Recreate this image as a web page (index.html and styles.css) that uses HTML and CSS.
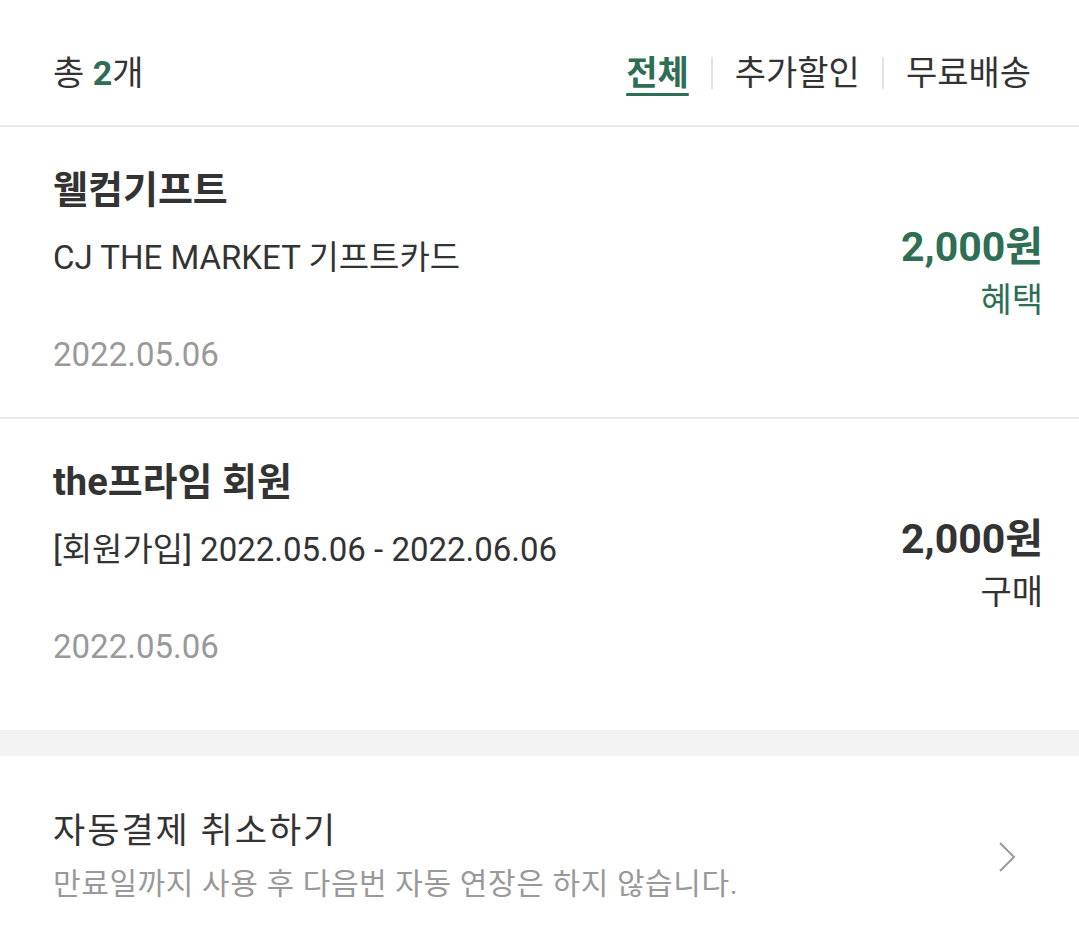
FILE: index.html
```html
<!DOCTYPE html>
<html lang="ko">
<head>
    <meta charset="UTF-8">
    <meta name="viewport" content="width=device-width, initial-scale=1.0">
    <title>멤버십 내역</title>
    <link rel="stylesheet" href="styles.css">
</head>
<body>
    <div class="list-header">
        <p class="total">총 <strong>2</strong>개</p>
        <ul class="tabs">
            <li class="tab active">전체</li>
            <li class="tab">추가할인</li>
            <li class="tab">무료배송</li>
        </ul>
    </div>

    <ul class="history">
        <li class="history-item">
            <div class="item-info">
                <p class="item-title">웰컴기프트</p>
                <p class="item-desc">CJ THE MARKET 기프트카드</p>
                <p class="item-date">2022.05.06</p>
            </div>
            <div class="item-amount benefit">
                <p class="price">2,000원</p>
                <p class="type">혜택</p>
            </div>
        </li>
        <li class="history-item">
            <div class="item-info">
                <p class="item-title">the프라임 회원</p>
                <p class="item-desc">[회원가입] 2022.05.06 - 2022.06.06</p>
                <p class="item-date">2022.05.06</p>
            </div>
            <div class="item-amount">
                <p class="price">2,000원</p>
                <p class="type">구매</p>
            </div>
        </li>
    </ul>

    <a class="cancel-link" href="#">
        <div>
            <p class="cancel-title">자동결제 취소하기</p>
            <p class="cancel-desc">만료일까지 사용 후 다음번 자동 연장은 하지 않습니다.</p>
        </div>
        <svg class="chevron" width="20" height="32" viewBox="0 0 20 32">
            <polyline points="3,2 17,16 3,30" fill="none" stroke="#999" stroke-width="2"/>
        </svg>
    </a>
</body>
</html>
```

FILE: styles.css
```css
body {
    margin: 0;
    font-family: Roboto, "Noto Sans CJK KR", sans-serif;
    color: #333333;
    background-color: #ffffff;
}
p, ul {
    margin: 0;
    padding: 0;
}
ul {
    list-style: none;
}
.list-header {
    height: 127px;
    box-sizing: border-box;
    display: flex;
    justify-content: space-between;
    align-items: center;
    padding: 20px 48px 0 53px;
    border-bottom: 2px solid #ebebeb;
}
.total {
    font-size: 34px;
    line-height: 40px;
}
.total strong {
    color: #2d6e55;
}
.tabs {
    display: flex;
    align-items: center;
}
.tab {
    font-size: 34px;
    line-height: 32px;
    padding: 0 22px;
    border-left: 2px solid #e3e3e3;
}
.tab:first-child {
    border-left: none;
}
.tab:last-child {
    padding-right: 0;
}
.tab.active {
    color: #2d6e55;
    font-weight: bold;
    text-decoration: underline;
    text-decoration-thickness: 3px;
    text-underline-offset: 8px;
}
.history-item {
    display: flex;
    justify-content: space-between;
    align-items: center;
    padding: 38px 36px 40px 53px;
    border-bottom: 2px solid #ebebeb;
}
.history-item:last-child {
    border-bottom: none;
    padding-bottom: 61px;
}
.item-title {
    font-size: 38px;
    font-weight: bold;
    line-height: 50px;
}
.item-desc {
    font-size: 33px;
    line-height: 44px;
    margin-top: 21px;
}
.item-date {
    font-size: 33px;
    line-height: 44px;
    margin-top: 53px;
    color: #999999;
}
.item-amount {
    text-align: right;
}
.price {
    font-size: 41px;
    font-weight: bold;
    line-height: 50px;
}
.type {
    font-size: 34px;
    line-height: 40px;
    margin-top: 8px;
}
.benefit {
    color: #2d6e55;
}
.cancel-link {
    display: flex;
    justify-content: space-between;
    align-items: center;
    border-top: 26px solid #f3f3f3;
    padding: 54px 62px 40px 53px;
    color: #333333;
    text-decoration: none;
}
.cancel-title {
    font-size: 35px;
    line-height: 44px;
    letter-spacing: 2px;
}
.cancel-desc {
    font-size: 30px;
    line-height: 40px;
    margin-top: 10px;
    color: #999999;
    letter-spacing: 0.6px;
}
.chevron {
    display: block;
}
```
